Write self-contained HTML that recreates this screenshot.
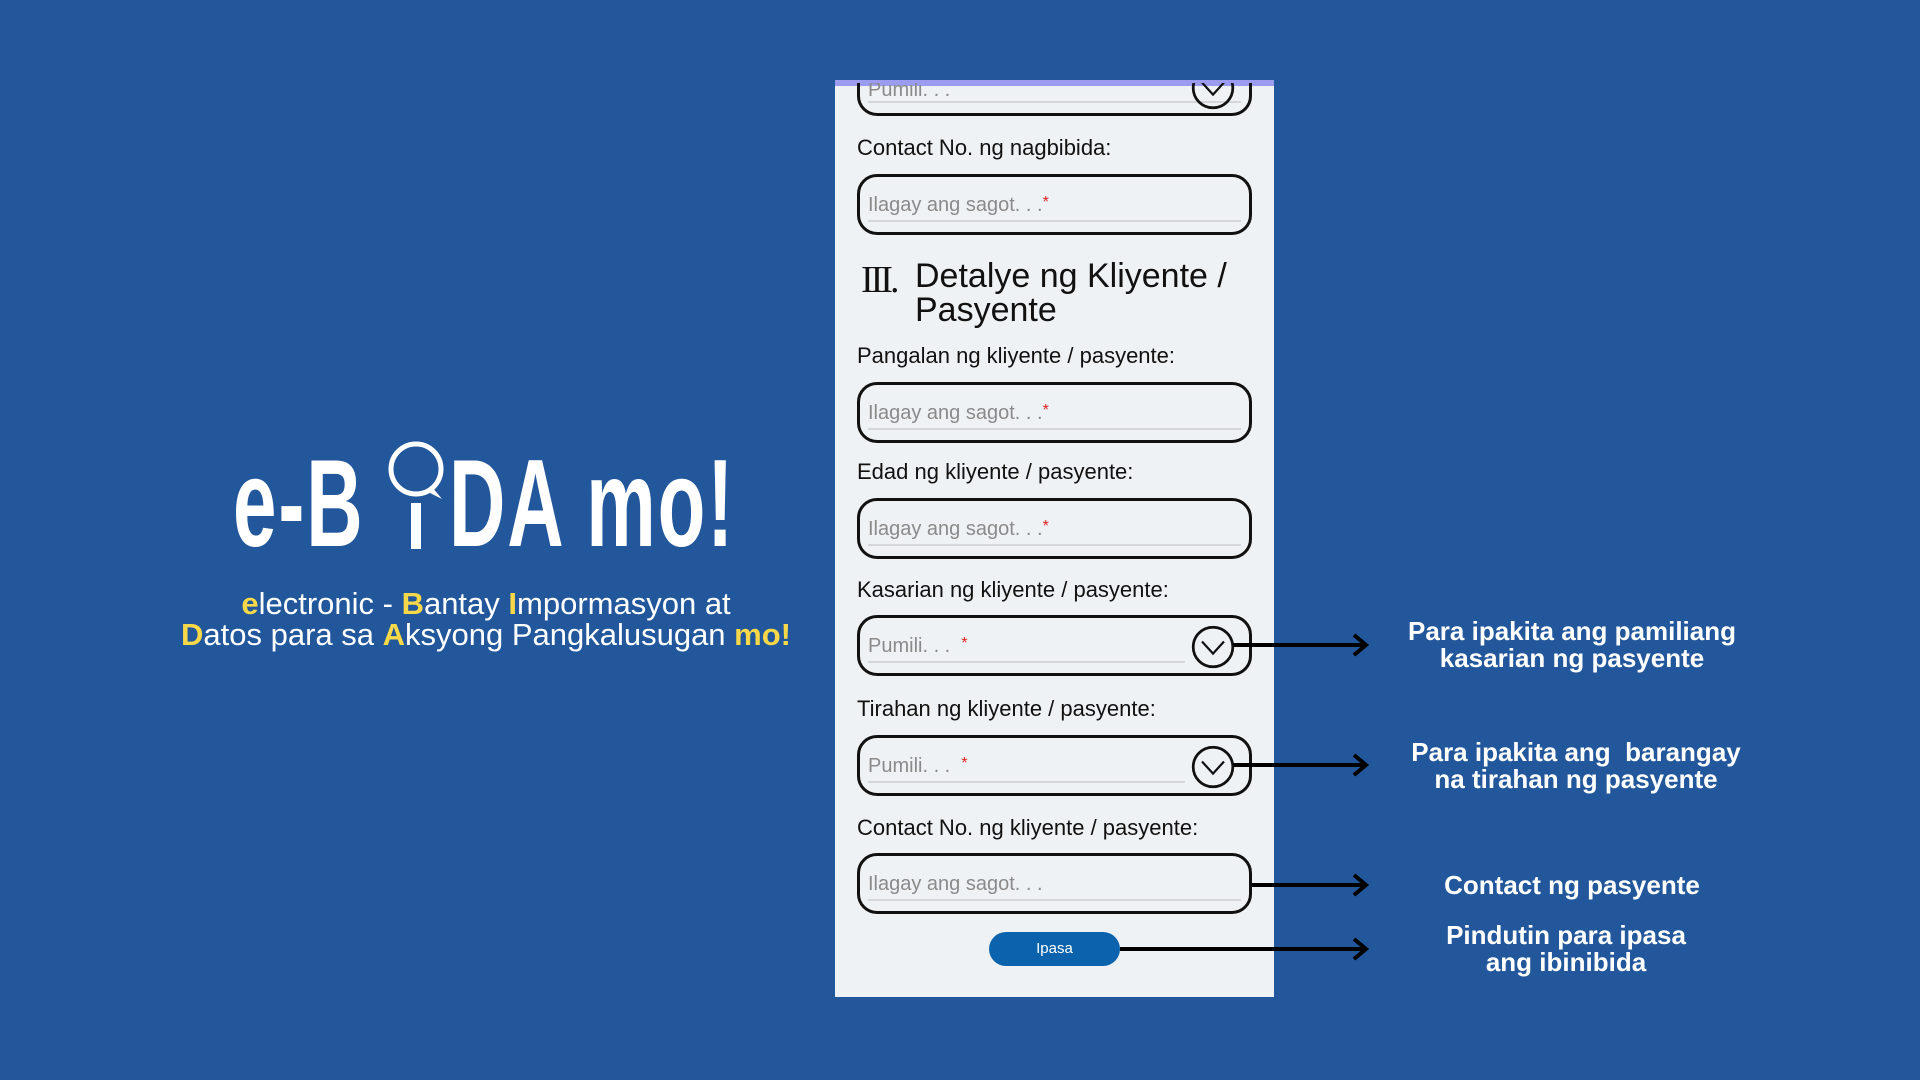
<!DOCTYPE html>
<html><head><meta charset="utf-8"><style>
*{margin:0;padding:0;box-sizing:border-box}
body{width:1920px;height:1080px;background:#22579c;position:relative;overflow:hidden;font-family:"Liberation Sans",sans-serif}
.abs{position:absolute}
.panel{left:835px;top:83px;width:439px;height:914px;background:#eff2f4;border-top:3px solid #9b9cf0;overflow:hidden}
.lbl{position:absolute;left:857px;font-size:22px;color:#111;white-space:nowrap}
.fld{position:absolute;left:857px;width:395px;height:61px;border:3px solid #111;border-radius:20px}
.fld .ph{position:absolute;left:8px;top:17px;font-size:20px;color:#8a8a8a;white-space:nowrap}
.fld .ph b{color:#d22;font-weight:normal;font-size:16px;vertical-align:top}
.fld .ln{position:absolute;left:8px;right:8px;bottom:10px;height:2px;background:#d4d6dc}
.fld .chev{position:absolute;right:14px;top:7px;width:44px;height:44px}
.note{position:absolute;color:#fff;font-weight:bold;font-size:26px;text-align:center;line-height:27px;white-space:nowrap;font-family:"Liberation Sans",sans-serif}
.arrow{position:absolute;height:4px;background:#000}
.logo{position:absolute;color:#fff;font-weight:bold;font-size:124px;top:442px;line-height:124px;transform-origin:left top;transform:scaleX(0.63);white-space:nowrap;letter-spacing:3px}
.sub{position:absolute;color:#fff;font-size:31px;white-space:nowrap;text-align:center;left:146px;width:680px;line-height:31px}
.y{color:#f7d849;font-weight:bold}
</style></head><body>
<div class="logo" style="left:233px">e-B</div>
<div class="logo" style="left:449px">DA mo!</div>
<svg class="abs" style="left:380px;top:435px" width="80" height="120">
<circle cx="36" cy="34" r="25" fill="none" stroke="#fff" stroke-width="5"/>
<path d="M52 52 L62 64 L50 58 Z" fill="#fff"/>
<rect x="31" y="68" width="10" height="46" fill="#fff"/>
</svg>
<div class="sub" style="top:588px"><span class="y">e</span>lectronic - <span class="y">B</span>antay <span class="y">I</span>mpormasyon at</div>
<div class="sub" style="top:619px"><span class="y">D</span>atos para sa <span class="y">A</span>ksyong Pangkalusugan <span class="y">mo!</span></div>

<div class="abs panel"></div>
<div class="fld" style="top:54px;border-radius:0 0 20px 20px;height:62px;clip-path:inset(29px 0 0 0)"><div class="ph" style="top:22px">Pumili. . .</div><div class="ln"></div>
<svg class="chev" style="top:9px" viewBox="0 0 40 40"><circle cx="20" cy="20" r="18" fill="none" stroke="#111" stroke-width="2.5"/><path d="M10 15 L20 26 L30 15" fill="none" stroke="#111" stroke-width="2"/></svg></div>
<div class="abs" style="left:835px;top:80px;width:439px;height:3px;background:#9b9cf0"></div>

<div class="lbl" style="top:135px">Contact No. ng nagbibida:</div>
<div class="fld" style="top:174px"><div class="ph">Ilagay ang sagot. . .<b>*</b></div><div class="ln"></div></div>
<div class="abs" style="left:861px;top:258px;font-family:'Liberation Serif',serif;font-size:38px;color:#111;letter-spacing:-3px">III.</div>
<div class="abs" style="left:915px;top:259px;font-size:34px;color:#111;line-height:34px">Detalye ng Kliyente /<br>Pasyente</div>
<div class="lbl" style="top:343px">Pangalan ng kliyente / pasyente:</div>
<div class="fld" style="top:382px"><div class="ph">Ilagay ang sagot. . .<b>*</b></div><div class="ln"></div></div>
<div class="lbl" style="top:459px">Edad ng kliyente / pasyente:</div>
<div class="fld" style="top:498px"><div class="ph">Ilagay ang sagot. . .<b>*</b></div><div class="ln"></div></div>
<div class="lbl" style="top:577px">Kasarian ng kliyente / pasyente:</div>
<div class="fld" style="top:615px"><div class="ph">Pumili. . . &nbsp;<b>*</b></div><div class="ln" style="right:64px"></div>
<svg class="chev" viewBox="0 0 40 40"><circle cx="20" cy="20" r="18" fill="none" stroke="#111" stroke-width="2.5"/><path d="M10 15 L20 26 L30 15" fill="none" stroke="#111" stroke-width="2"/></svg></div>
<div class="lbl" style="top:696px">Tirahan ng kliyente / pasyente:</div>
<div class="fld" style="top:735px"><div class="ph">Pumili. . . &nbsp;<b>*</b></div><div class="ln" style="right:64px"></div>
<svg class="chev" viewBox="0 0 40 40"><circle cx="20" cy="20" r="18" fill="none" stroke="#111" stroke-width="2.5"/><path d="M10 15 L20 26 L30 15" fill="none" stroke="#111" stroke-width="2"/></svg></div>
<div class="lbl" style="top:815px">Contact No. ng kliyente / pasyente:</div>
<div class="fld" style="top:853px"><div class="ph">Ilagay ang sagot. . .</div><div class="ln"></div></div>
<div class="abs" style="left:989px;top:932px;width:131px;height:34px;border-radius:17px;background:#0b63ad;color:#fff;font-size:15px;text-align:center;line-height:34px">Ipasa</div>

<div class="arrow" style="left:1233px;top:643px;width:130px"></div>
<div class="arrow" style="left:1233px;top:763px;width:130px"></div>
<div class="arrow" style="left:1252px;top:883px;width:111px"></div>
<div class="arrow" style="left:1120px;top:947px;width:243px"></div>
<svg class="abs" style="left:1350px;top:630px" width="24" height="340">
<path d="M4 5 L16 15 L4 25 M4 125 L16 135 L4 145 M4 245 L16 255 L4 265 M4 309 L16 319 L4 329" fill="none" stroke="#000" stroke-width="4"/>
</svg>

<div class="note" style="left:1372px;width:400px;top:618px">Para ipakita ang pamiliang<br>kasarian ng pasyente</div>
<div class="note" style="left:1376px;width:400px;top:739px">Para ipakita ang&nbsp; barangay<br>na tirahan ng pasyente</div>
<div class="note" style="left:1372px;width:400px;top:872px">Contact ng pasyente</div>
<div class="note" style="left:1366px;width:400px;top:922px">Pindutin para ipasa<br>ang ibinibida</div>
</body></html>
